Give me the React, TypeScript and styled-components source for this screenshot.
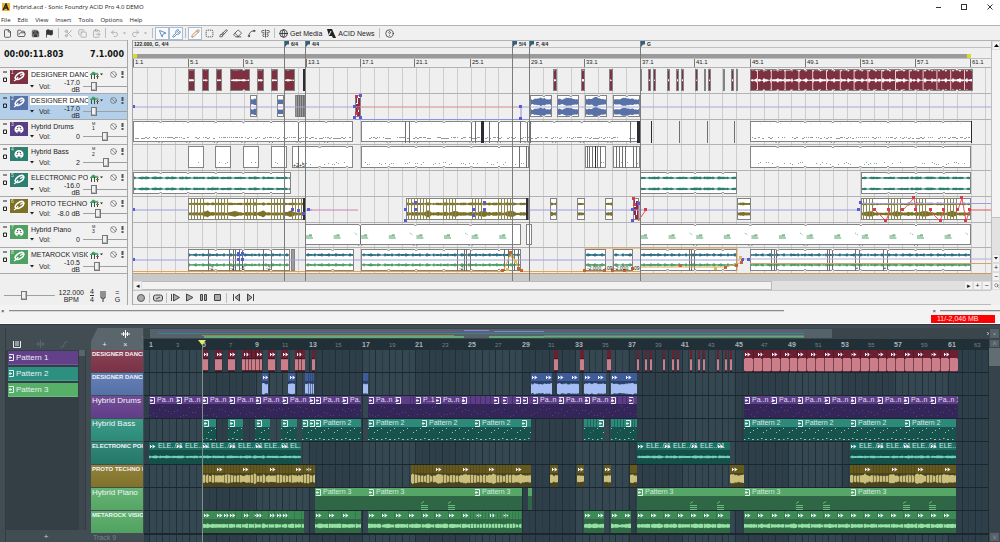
import React from "react";
import styled, { createGlobalStyle, css } from "styled-components";
import {
  File, FolderOpen, Save, Flag, Scissors, Copy, ClipboardPaste, Undo2, Redo2, MousePointer2,
  Wrench, Pencil, BoxSelect, Brush, Eraser, Spline, AlignCenterVertical, Globe, HelpCircle,
  Ban, Search,
} from "lucide-react";

const NARROW = `"Liberation Sans Narrow", "Liberation Sans", sans-serif`;

const Global = createGlobalStyle`
  *, *::before, *::after { box-sizing: border-box; }
  html, body { margin: 0; background: #efefef; }
  body { font-family: ${NARROW}; font-size: 7px; color: #1c1c1c; }
  button { font: inherit; color: inherit; background: none; border: 0; padding: 0; display: inline-flex; align-items: center; justify-content: center; }
  svg { display: block; flex: none; }
`;

/* ---------- drawing helpers ---------- */

const noise = (n: number) => {
  const v = Math.sin(n * 12.9898) * 43758.5453;
  return v - Math.floor(v);
};

type Amp = (x: number) => number;

const wavePath = (start: number, width: number, mid: number, amp: Amp) => {
  let top = `M0 ${mid}`;
  let back = "";
  for (let i = 0; i <= width; i += 1) {
    const a = amp(start + i);
    top += `L${i} ${(mid - a).toFixed(1)}`;
    back = `L${i} ${(mid + a * 0.9).toFixed(1)}` + back;
  }
  return top + back + "Z";
};

const amps: Record<string, Amp> = {
  red: (x) => ((x - 750) % 7 < 0.9 && x > 750 ? 3 : 4.3 + noise(x) * 1.2),
  blue: (x) => 2 + noise(x) * 1.4 + 2 * Math.max(0, 1 - Math.abs(((x - 529) % 27.6) - 12) / 6),
  teal: (x) => (x % 13.8 > 11 ? 0.4 : 0.8 + noise(x) * 0.7),
  olive: (x) => 0.6 + noise(x) * 1,
  oliveLow: (x) => 1 + noise(x) * 1.2 + 1.6 * Math.max(0, 1 - Math.abs((x % 27.6) - 14) / 5),
  meta: (x) => 0.6 + (x % 7 < 1 ? 1.4 : noise(x) * 0.6),
  fRed: (x) => ((x - 744) % 8.9 < 0.8 ? 5.8 : 6.9),
  fBlue: (x) => 4.4 + noise(x) * 1.6,
  fTeal: (x) => (x % 13.3 > 12 ? 0.4 : 0.7 + noise(x) * 0.9),
  fOlive: (x) => 2.6 + noise(x) * 2 + 1.4 * Math.max(0, 1 - Math.abs((x % 26.6) - 14) / 4),
  fGreen: (x) => 1.3 + noise(x) * 1.2,
};

/* ---------- window frame ---------- */

const Page = styled.div`
  min-height: 100vh;
  display: flex;
  flex-direction: column;
  overflow: hidden;
`;
const TitleBar = styled.header`
  height: 14px;
  background: #fff;
  display: flex;
  align-items: center;
  padding: 0 3px 0 2px;
  gap: 3px;
`;
const Title = styled.h1`
  margin: 0;
  flex: 1;
  font: 6px "Open Sans", sans-serif;
  color: #222;
`;
const WinButton = styled.button`
  width: 14px;
  height: 12px;
  margin-left: 9px;
`;
const MenuBar = styled.nav`
  height: 12px;
  background: #fff;
  border-bottom: 1px solid #b4b4b4;
  display: flex;
  align-items: center;
  gap: 7px;
  padding: 0 1px;
  button { font: 6px "Open Sans", sans-serif; }
`;
const ToolBar = styled.div`
  height: 14px;
  display: flex;
  align-items: center;
  background: #f0f0f0;
`;
const Tool = styled.button<{ $on?: boolean; $dim?: boolean; $w?: number }>`
  width: ${(p) => p.$w ?? 14}px;
  height: 13px;
  color: ${(p) => (p.$dim ? "#a2a2a2" : "#333")};
  ${(p) => p.$on && css`background: #f8fafd; border: 1px solid #a9bcd6; color: #34689d;`}
`;
const TextTool = styled.button`
  height: 13px;
  gap: 2px;
  padding: 0 3px 0 2px;
  font: 7px "Liberation Sans", sans-serif;
`;
const Divider = styled.span<{ $gap?: number }>`
  width: 1px;
  height: 10px;
  margin: 0 ${(p) => p.$gap ?? 2}px;
  background: #bdbdbd;
`;

const Workspace = styled.div`
  display: grid;
  grid-template-columns: 129px minmax(0, 1fr) 9px;
  column-gap: 0;
  background: #efefef;
`;
const LeftColumn = styled.section`
  margin-right: 1px;
  border-right: 1px solid #a6a6a6;
`;
const RightColumn = styled.section`
  border-left: 1px solid #a6a6a6;
  margin-left: 3px;
  min-width: 0;
`;
const Clock = styled.div`
  height: 27px;
  border-top: 1px solid #c2c2c2;
  display: flex;
  align-items: center;
  justify-content: space-between;
  padding: 0 3px 0 4px;
  font: bold 8px "DejaVu Sans", sans-serif;
  color: #111;
`;

/* ---------- track headers ---------- */

const TrackList = styled.div`
  height: 206px;
  display: grid;
  grid-template-rows: repeat(8, 1fr);
`;
const TrackHead = styled.div<{ $selected?: boolean }>`
  display: grid;
  grid-template-columns: 8px 18px 1fr;
  column-gap: 2px;
  padding-top: 2px;
  border-top: 1px solid #a9a9a9;
  background: ${(p) => (p.$selected ? "#b4cfe9" : "#f1f1f1")};
  min-height: 0;
  overflow: hidden;
`;
const MiniButtons = styled.div`
  display: flex;
  flex-direction: column;
  align-items: flex-end;
  gap: 4px;
  padding-top: 1px;
`;
const Tile = styled.div<{ $c: string }>`
  height: 14px;
  background: ${(p) => p.$c};
  color: #fff;
  position: relative;
  display: flex;
  align-items: center;
  justify-content: center;
`;
const TileNumber = styled.span`
  position: absolute;
  left: 1px;
  top: 0;
  font-size: 5px;
  line-height: 5px;
  opacity: 0.8;
`;
const HeadLines = styled.div`
  display: grid;
  grid-template-rows: 9px 12px;
  min-width: 0;
`;
const NameLine = styled.div`
  display: grid;
  grid-template-columns: 58px 12px 8px 10px 1fr;
  align-items: center;
`;
const Name = styled.span<{ $fill?: boolean }>`
  padding-left: 1px;
  line-height: 9px;
  white-space: nowrap;
  overflow: hidden;
  background: ${(p) => (p.$fill ? "#fff" : "transparent")};
`;
const VolLine = styled.label`
  display: grid;
  grid-template-columns: 8px 16px 24px 44px;
  column-gap: 1px;
  align-items: center;
`;
const Value = styled.span`
  text-align: right;
`;
const Slider = styled.input<{ $thumb?: string }>`
  appearance: none;
  width: 100%;
  height: 10px;
  margin: 0 0 0 2px;
  background: linear-gradient(#9f9f9f, #9f9f9f) center / 100% 1px no-repeat;
  &::-webkit-slider-thumb {
    appearance: none;
    width: 6px;
    height: 9px;
    background: #f0f0f0;
    border: 1px solid #777;
    box-shadow: inset -1px -1px #b9b9b9;
  }
`;
const TempoPanel = styled.div`
  height: 32px;
  display: flex;
  align-items: center;
  gap: 6px;
  padding: 12px 4px 0 2px;
  border-top: 1px solid #a9a9a9;
  line-height: 7px;
  text-align: center;
  label { width: 52px; }
`;
const Fraction = styled.span`
  display: grid;
  line-height: 7px;
  span + span { border-top: 1px solid #333; }
`;

/* ---------- timeline ---------- */

const Timeline = styled.div`
  position: relative;
  overflow: hidden;
`;
const MarkerBar = styled.div`
  height: 8px;
  border-top: 1px solid #b2b2b2;
  border-bottom: 1px solid #c0c0c0;
  font: bold 5px "Liberation Sans", sans-serif;
  line-height: 6px;
  padding-left: 1px;
`;
const LoopBar = styled.div`
  height: 11px;
  padding-top: 6px;
  border-bottom: 1px solid #c0c0c0;
`;
const LoopFill = styled.div`
  height: 4px;
  margin-right: 20px;
  background: #9b9b9b;
  border-left: 4px solid #d9dc2e;
  border-right: 4px solid #d9dc2e;
`;
const Ruler = styled.div`
  height: 8px;
  position: relative;
  font: 6px "Liberation Sans", sans-serif;
`;
const Tick = styled.span`
  position: absolute;
  top: 0;
  height: 8px;
  line-height: 7px;
  border-left: 1px solid #777;
  padding-left: 1px;
`;
const Marker = styled.div<{ $tall?: boolean }>`
  position: absolute;
  top: 1px;
  bottom: 0;
  border-left: 1px solid #7b7b7b;
  font: bold 5px "Liberation Sans", sans-serif;
  line-height: 6px;
  padding-left: 6px;
  z-index: 2;
  &::before {
    content: "";
    position: absolute;
    left: 0;
    top: 0;
    width: 4px;
    height: 6px;
    background: #2d6184;
    clip-path: polygon(0 0, 100% 0, 100% 60%, 50% 60%, 0 100%);
  }
`;
const Lanes = styled.div`
  height: 206px;
  position: relative;
  display: grid;
  grid-template-rows: repeat(8, 1fr);
`;
const GridLines = styled.svg`
  position: absolute;
  inset: 0;
`;
const Lane = styled.div`
  position: relative;
  border-top: 1px solid #b2b2b2;
  min-height: 0;
`;
const Clip = styled.div<{ $plain?: boolean; $gray?: boolean }>`
  position: absolute;
  top: 1px;
  bottom: 2px;
  overflow: hidden;
  background: ${(p) => (p.$gray ? "#9b9b9b" : "#fff")};
  outline: 1px solid #838383;
  outline-offset: -1px;
`;
const Overlay = styled.svg`
  position: absolute;
  inset: 0;
  overflow: visible;
  z-index: 1;
`;
const UnderLane = styled.div`
  height: 8px;
  background: #c9c9c9;
  border-top: 1px solid #c99c5c;
`;
const HScroll = styled.div`
  height: 9px;
  display: flex;
  background: #e0e0e0;
  button { width: 9px; background: #f4f4f4; border: 1px solid #ddd; }
`;
const HThumb = styled.div`
  flex: 0 1 630px;
  background: #f2f2f2;
  border: 1px solid #b9b9b9;
  border-left: 0;
`;
const Spacer = styled.span`
  flex: 1;
`;
const Transport = styled.div`
  height: 15px;
  display: flex;
  align-items: center;
  border-top: 1px solid #c7c7c7;
  border-bottom: 1px solid #b9b9b9;
  padding-left: 1px;
`;
const VScroll = styled.div`
  border-left: 1px solid #bcbcbc;
  border-top: 1px solid #b2b2b2;
  display: flex;
  flex-direction: column;
  background: #e2e2e2;
  height: 250px;
  button { height: 9px; background: #f4f4f4; border: 1px solid #ddd; }
`;
const VThumb = styled.div`
  flex: 0 1 168px;
  background: #f4f4f4;
  border-bottom: 1px solid #c0c0c0;
`;
const Dock = styled.footer`
  height: 19px;
  background: #f3f3f3;
  border-bottom: 1px solid #fff;
  display: grid;
  grid-template-rows: 9px 9px;
  align-items: end;
`;
const DockEdge = styled.div`
  display: flex;
  align-items: center;
  gap: 4px;
  padding-left: 1px;
  height: 6px;
  line-height: 6px;
  font-size: 6px;
`;
const DockRule = styled.span<{ $w: number }>`
  flex: 0 1 ${(p) => p.$w}px;
  height: 2px;
  border-top: 1px solid #8b8b8b;
  border-bottom: 1px solid #d8d8d8;
`;
const Memory = styled.output`
  justify-self: end;
  margin-right: 5px;
  width: 64px;
  height: 8px;
  padding-left: 6px;
  background: #fd0202;
  color: #ffe3e3;
  line-height: 8px;
  font-size: 7px;
`;

const LEFT = 133;
const px = (x: number) => x - LEFT;

type Kind = "red" | "blue" | "drums" | "bass" | "teal" | "olive" | "piano" | "meta" | "gray" | "mix";
type Span = [number, number, Kind?];

const MAROON = "#7d3040", BLUE = "#5872a8", PURPLE = "#563f86", TEAL = "#2d8070", OLIVE = "#7c7125", GREEN = "#4ea162";

const ClipArt = ({ kind, x, w }: { kind: Kind; x: number; w: number }) => {
  const dots: React.ReactNode[] = [];
  if (kind === "drums") {
    for (let i = 2; i < w - 2; i += 2) {
      const n = noise(x + i);
      if (n > 0.25) dots.push(<rect key={i} x={i} y={15 + Math.round(n * 2)} width={n > 0.6 ? 2 : 1} height="1" fill="#969696" />);
      if (i % 10 === 0) dots.push(<rect key={`t${i}`} x={i} y={2} width="1" height="1" fill="#ddd" />);
    }
  }
  if (kind === "bass") {
    for (let i = 4; i < w - 2; i += 2) {
      const n = noise(x * 3 + i);
      if (n > 0.45 && (x + i) % 27 < 21) dots.push(<rect key={i} x={i} y={14 + Math.round(n * 4)} width="1" height="1" fill="#7fa79c" />);
    }
  }
  if (kind === "piano" && w > 20) {
    for (let i = 0; i < w - 4; i += 27.6) {
      dots.push(
        <path key={i} d={`M${i + 1} 12h6M${i + 1} 14h7M${i + 4} 11h3`} stroke="#4ea162" strokeWidth="1" />,
      );
      if (Math.round(i / 27.6) % 2 === 1) dots.push(<path key={`s${i}`} d={`M${i + 22} 9l3 2`} stroke="#6cb07c" strokeDasharray="1 1" />);
    }
  }
  return (
    <svg width={w} height="23">
      {kind === "red" && [6, 17].map((m) => <path key={m} d={wavePath(x, w, m, amps.red)} fill={MAROON} />)}
      {kind === "red" && w > 100 && Array.from({ length: 40 }, (_, i) => <rect key={i} x={i * 13.8 + 7} y="1" width="1" height="21" fill="#e6c9ce" />)}
      {kind === "blue" && [7, 17].map((m) => <path key={m} d={wavePath(x, w, m, amps.blue)} fill={BLUE} />)}
      {kind === "teal" && [6, 17].map((m) => <path key={m} d={wavePath(x, w, m, amps.teal)} fill={TEAL} />)}
      {kind === "olive" && (
        <>
          <path d={wavePath(x, w, 6, amps.olive)} fill={OLIVE} />
          <path d={wavePath(x, w, 16, amps.oliveLow)} fill={OLIVE} />
        </>
      )}
      {kind === "meta" && (
        <>
          <path d={wavePath(x, w, 6, amps.meta)} fill="#2f6f86" />
          <path d={wavePath(x, w, 16, amps.meta)} fill={GREEN} />
        </>
      )}
      {kind === "mix" && <path d="M1 0v8M4 3v9M2 9v8M5 12v10M3 17v6" stroke="#8a2a48" strokeWidth="2" />}
      {dots}
    </svg>
  );
};

interface Track {
  name: string;
  color: string;
  vol: string;
  level: number;
  kind: Kind;
  spans: Span[];
  cuts?: number[];
  bold?: [number, number][];
  notch?: boolean;
  midi?: number;
}

const range = (a: number, b: number, step: number) => {
  const out: number[] = [];
  for (let v = a; v < b; v += step) out.push(v);
  return out;
};

const tracks: Track[] = [
  {
    name: "DESIGNER DANCE ..", color: MAROON, vol: "-17.0 dB", level: 20, kind: "red", notch: true,
    spans: [[188, 195], [202, 209], [216, 222], [230, 250], [257, 264], [271, 278], [284, 295], [553, 557], [581, 585], [609, 613],
      [640, 642], [648, 651], [653, 656], [667, 670], [676, 679], [681, 684], [695, 698], [704, 706], [708, 711], [723, 725], [731, 734], [736, 738], [750, 973]],
    bold: [[303, 2]],
  },
  {
    name: "DESIGNER DANCE ..", color: BLUE, vol: "-17.0 dB", level: 20, kind: "blue", notch: true,
    spans: [[250, 257], [277, 284], [295, 305, "gray"], [355, 361, "mix"], [530, 552], [557, 579], [585, 607], [613, 640]],
    cuts: [297, 299, 301, 303],
  },
  {
    name: "Hybrid Drums", color: PURPLE, vol: "0", level: 50, kind: "drums", notch: true, midi: 1,
    spans: [[133, 353], [361, 640], [750, 972]],
    cuts: [298, 405, 409, 471, 475, 489, 498, 520, 527, 530, 630, 679, 707, 734],
    bold: [[481, 3], [637, 3], [651, 1], [971, 1]],
  },
  {
    name: "Hybrid Bass", color: TEAL, vol: "2", level: 52, kind: "bass", notch: true, midi: 2,
    spans: [[188, 204], [215, 231], [243, 259], [271, 287], [292, 353], [361, 529], [585, 606], [613, 640], [750, 971]],
    cuts: [298, 305, 519, 526, 587, 589, 592, 597, 600, 616, 619, 622, 625, 633, 636],
    bold: [[595, 1]],
  },
  {
    name: "ELECTRONIC POIN..", color: TEAL, vol: "-16.0 dB", level: 20, kind: "teal", notch: true,
    spans: [[133, 291], [640, 737], [861, 971]],
  },
  {
    name: "PROTO TECHNO h..", color: OLIVE, vol: "-8.0 dB", level: 32, kind: "olive",
    spans: [[188, 305], [406, 529], [550, 557], [577, 585], [605, 613], [633, 639, "mix"], [737, 751], [861, 971]],
    cuts: [...range(191, 204, 3), ...range(215, 230, 3), ...range(244, 258, 3), ...range(271, 286, 3), ...range(292, 302, 3),
      ...range(408, 430, 3), ...range(443, 458, 3), ...range(472, 483, 3), ...range(498, 513, 3), ...range(863, 874, 3), ...range(888, 902, 3), ...range(916, 928, 3), ...range(944, 958, 3)],
    bold: [[303, 2], [526, 2]],
  },
  {
    name: "Hybrid Piano", color: GREEN, vol: "0", level: 50, kind: "piano", notch: true, midi: 3,
    spans: [[305, 521], [526, 532], [640, 971]],
    cuts: [360],
  },
  {
    name: "METAROCK VISION..", color: GREEN, vol: "-10.5 dB", level: 28, kind: "meta", notch: true,
    spans: [[188, 290], [291, 295, "gray"], [305, 354], [361, 521], [585, 606], [613, 633], [640, 737], [750, 971]],
    cuts: [208, 229, 233, 235, 239, 242, 263, 271, 457, 464, 466, 470, 504, 508, 514, 518, 689, 691, 694, 771, 774, 776, 827, 829, 832, 855, 859, 883, 887],
  },
];

const rulerTicks: [number, string][] = [
  [133, "1.1"], [188, "5.1"], [243, "9.1"], [306, "13.1"], [360, "17.1"], [414, "21.1"], [470, "25.1"], [529, "29.1"], [584, "33.1"],
  [640, "37.1"], [694, "41.1"], [750, "45.1"], [805, "49.1"], [860, "53.1"], [915, "57.1"], [970, "61.1"],
];
const markers: [number, string][] = [[284, "6/4"], [305, "4/4"], [512, "5/4"], [529, "F, 4/4"], [640, "G"]];
const barLines = [...range(147, 284, 13.8), 298, ...range(319, 512, 13.8), ...range(543, 992, 13.8)];

const Nodes = ({ at, fill }: { at: [number, number][]; fill: string }) => (
  <>{at.map(([x, y], i) => <rect key={i} x={px(x) - 2} y={y - 2} width="3" height="3" fill={fill} />)}</>
);

const TransposeMarks = ({ at, y }: { at: [number, string][]; y: number }) => (
  <>{at.map(([x, t]) => <text key={x} x={px(x)} y={y} fontSize="5" fill="#222">{t}</text>)}</>
);

const envelopes: Record<number, React.ReactNode> = {
  1: (
    <>
      <path d={`M0 13H${px(361)}M${px(521)} 13H1200`} stroke="#a7a9d8" />
      <path d={`M${px(361)} 13H${px(521)}`} stroke="#d58a8a" />
      <path d={`M${px(355)} 25.5H${px(529)}M${px(521)} 13V25`} stroke="#8f92e0" />
      <Nodes fill="#5a5ad8" at={[[134, 13], [355, 13], [355, 24], [361, 2], [361, 24], [521, 13], [521, 25]]} />
      <Nodes fill="#c53a48" at={[[357, 3], [359, 15], [357, 20]]} />
    </>
  ),
  3: <TransposeMarks at={[[293, "+2"], [299, "+5"]]} y={22} />,
  5: (
    <>
      <path d={`M0 13H${px(188)}M${px(305)} 13H${px(312)}M${px(529)} 13H${px(861)}M${px(861)} 6.5H1200`} stroke="#9b9de0" />
      <path d={`M${px(307)} 13H${px(358)}`} stroke="#c983b0" />
      <path d={`M${px(638)} 24L${px(646)} 13M${px(640)} 4V24M${px(875)} 13L${px(886)} 24L${px(890)} 13M${px(903)} 13L${px(914)} 1L${px(916)} 13M${px(930)} 14L${px(940)} 24L${px(944)} 13M${px(958)} 13L${px(962)} 1L${px(966)} 24L${px(970)} 13H1200`} stroke="#dd5660" fill="none" />
      <Nodes fill="#5a5ad8" at={[[134, 13], [293, 13], [299, 14], [304, 17], [309, 13], [406, 13], [406, 24], [416, 6], [416, 13], [474, 13], [474, 19], [485, 6], [485, 13], [633, 13], [633, 24], [639, 7], [859, 13], [861, 6]]} />
      <Nodes fill="#d93c48" at={[[634, 2], [635, 8], [646, 13], [875, 13], [886, 24], [889, 13], [903, 13], [914, 1], [916, 13], [931, 13], [941, 24], [944, 13], [958, 13], [962, 1], [966, 24], [970, 13]]} />
    </>
  ),
  7: (
    <>
      <path d={`M0 12H${px(740)}`} stroke="#9b9de0" />
      <path d={`M${px(740)} 11H1200`} stroke="#aeb0df" />
      <path d={`M${px(750)} 15.5H1200`} stroke="#d7a273" />
      <path d={`M0 23.5H${px(503)}L${px(511)} 5L${px(520)} 22M${px(523)} 23.5H${px(640)}M${px(640)} 19H${px(690)}L${px(725)} 19L${px(740)} 15M${px(585)} 0H${px(737)}V23`} stroke="#dda75a" fill="none" />
      <Nodes fill="#5a5ad8" at={[[134, 12], [239, 6], [243, 6], [239, 12], [243, 12], [743, 12], [749, 12]]} />
      <Nodes fill="#c9632c" at={[[503, 23], [511, 5], [519, 21], [522, 23], [585, 23], [605, 23], [613, 23], [625, 23], [633, 21], [681, 18], [726, 20], [737, 18], [742, 15]]} />
      <Nodes fill="#e0bb45" at={[[513, 9], [516, 14], [508, 22], [716, 21], [741, 10]]} />
      <TransposeMarks at={[[209, "-2"], [230, "-2"], [240, "-5"], [266, "-2"], [459, "-2"], [587, "-2.000, -.09"], [614, "-2.000, -.09"], [856, "•"], [884, "•"]]} y={22} />
    </>
  ),
};

const LoopIcon = () => (
  <svg width="14" height="12" viewBox="0 0 14 12" fill="none" stroke="currentColor">
    <ellipse cx="7.500" cy="5" rx="4.800" ry="2.600" transform="rotate(-35 7.500 5)" strokeWidth="1.600" />
    <path d="M2 10C3 9 5 9 6 6M8 4.500l3-1.500" strokeWidth="1.200" />
  </svg>
);
const MidiIcon = () => (
  <svg width="14" height="12" viewBox="0 0 14 12">
    <path d="M3 8.500A4.500 4.500 0 1 1 11 8.500L8.500 10.500V8.500H5.500V10.500Z" fill="#fff" />
    <path d="M5 6.500h.01M7 4h.01M9 6.500h.01M5.500 4.700h.01M8.500 4.700h.01" stroke="#333" strokeWidth="1.200" strokeLinecap="round" />
  </svg>
);
const FxIcon = () => (
  <svg width="9" height="8" viewBox="0 0 9 8">
    <path d="M0 3.500L3 .5L6 2V4H0Z" fill="#3ca35f" />
    <path d="M5 2.500L7.500 1.500L9 4H5Z" fill="#58b47a" />
    <path d="M1.500 4V8M4.500 3V8M7.500 4V8" stroke="#3a5044" />
    <path d="M6 5.500h3" stroke="#c0504d" />
  </svg>
);
const Down = ({ s = 4 }: { s?: number }) => (
  <svg width={s} height="3" viewBox="0 0 4 3"><path d="M0 0H4L2 2.500Z" fill="currentColor" /></svg>
);

const TrackHeader = ({ track, index }: { track: Track; index: number }) => (
  <TrackHead $selected={index === 1}>
    <MiniButtons>
      <button aria-label="Minimize track"><svg width="5" height="2"><path d="M0 1H4" stroke="#222" /></svg></button>
      <button aria-label="Restore track"><svg width="5" height="5"><path d="M.5 1V4.500H3.500V1Z" stroke="#222" fill="none" /></svg></button>
    </MiniButtons>
    <Tile $c={track.color}>
      <TileNumber>{index + 1}</TileNumber>
      {track.midi ? <MidiIcon /> : <LoopIcon />}
    </Tile>
    <HeadLines>
      <NameLine>
        <Name $fill={index < 2}>{track.name}</Name>
        {track.midi ? <MidiPort n={track.midi} /> : <button aria-label="Track effects"><FxIcon /></button>}
        {track.midi ? <i /> : <Down s={3} />}
        <button aria-label="Mute"><Ban size={7} color="#555" /></button>
        <button aria-label="Solo"><svg width="3" height="7"><path d="M1.500 0V4M1.500 5V7" stroke="#555" strokeWidth="2" /></svg></button>
      </NameLine>
      <VolLine>
        <Down />
        <span>Vol:</span>
        <Value>{track.vol}</Value>
        <Slider type="range" min="0" max="100" defaultValue={track.level} />
      </VolLine>
    </HeadLines>
  </TrackHead>
);

const Port = styled.span`
  font-size: 4px;
  line-height: 4px;
  height: 9px;
  padding-left: 4px;
  transform-origin: left;
  display: grid;
  b { font-size: 5px; font-weight: normal; }
`;
const MidiPort = ({ n }: { n: number }) => <Port>M<b>{n}</b></Port>;

const LaneView = ({ track, index }: { track: Track; index: number }) => (
  <Lane>
    {track.spans.map(([a, b, kind], i) => (
      <Clip key={i} $gray={kind === "gray"} style={{ left: px(a), width: b - a }}>
        <ClipArt kind={kind ?? track.kind} x={a} w={b - a} />
      </Clip>
    ))}
    <Overlay width="100%" height="24">
      {(track.cuts ?? []).map((x) => <path key={x} d={`M${px(x) + 0.5} 1V23`} stroke={track.kind === "olive" ? "#8b854f" : "#6f6f6f"} />)}
      {(track.bold ?? []).map(([x, w]) => <rect key={x} x={px(x)} y="1" width={w} height="22" fill="#2e2b33" />)}
      {track.notch && track.spans.filter(([a, b]) => b - a > 19).map(([a, b]) => {
        const step = track.kind === "piano" ? 55.2 : track.kind === "blue" || track.kind === "red" ? 13.8 : 27.6;
        return range(a + step, b - 4, step).map((x) => (
          <path key={x} d={`M${px(x) - 2} 1l2 2l2-2M${px(x) - 2} 23l2-2l2 2`} fill="#efefef" stroke="#8a8a8a" />
        ));
      })}
      {envelopes[index]}
    </Overlay>
  </Lane>
);

const Glyph = ({ d, fill = "#aaa" }: { d: string; fill?: string }) => (
  <svg width="9" height="9" viewBox="0 0 9 9"><path d={d} fill={fill} stroke="#444" /></svg>
);

const I = { size: 9, strokeWidth: 2 };

const AcidWindow = () => (
  <>
    <TitleBar>
      <svg width="8" height="8" viewBox="0 0 8 8">
        <rect width="8" height="8" fill="#edb42c" />
        <path d="M1.200 7L4 1L6.300 7M2.500 5H5.800" stroke="#222" strokeWidth="1.500" fill="none" />
      </svg>
      <Title>Hybrid.acd - Sonic Foundry ACID Pro 4.0 DEMO</Title>
      <WinButton aria-label="Minimize"><svg width="5" height="5"><path d="M0 2.500H5" stroke="#333" /></svg></WinButton>
      <WinButton aria-label="Maximize"><svg width="6" height="6"><rect x=".5" y=".5" width="5" height="5" fill="none" stroke="#333" /></svg></WinButton>
      <WinButton aria-label="Close"><svg width="6" height="6"><path d="M.5 .5L5.500 5.500M5.500 .5L.5 5.500" stroke="#333" /></svg></WinButton>
    </TitleBar>
    <MenuBar>
      {["File", "Edit", "View", "Insert", "Tools", "Options", "Help"].map((m) => <button key={m}>{m}</button>)}
    </MenuBar>
    <ToolBar>
      <Tool aria-label="New"><File {...I} /></Tool>
      <Tool aria-label="Open"><FolderOpen {...I} /></Tool>
      <Tool aria-label="Save"><Save {...I} fill="#333" stroke="#999" /></Tool>
      <Tool aria-label="Publish"><Flag {...I} fill="#333" /></Tool>
      <Divider />
      <Tool $dim aria-label="Cut"><Scissors {...I} /></Tool>
      <Tool $dim aria-label="Copy"><Copy {...I} /></Tool>
      <Tool $dim aria-label="Paste"><ClipboardPaste {...I} /></Tool>
      <Divider />
      <Tool $dim $w={12} aria-label="Undo"><Undo2 {...I} /></Tool>
      <Tool $dim $w={9} aria-label="Undo history"><Down s={3} /></Tool>
      <Tool $dim $w={12} aria-label="Redo"><Redo2 {...I} /></Tool>
      <Tool $dim $w={9} aria-label="Redo history"><Down s={3} /></Tool>
      <Divider />
      <Tool $on aria-label="Snapping"><MousePointer2 {...I} /></Tool>
      <Tool $on aria-label="Automatic settings"><Wrench {...I} /></Tool>
      <Divider />
      <Tool $on aria-label="Draw"><Pencil {...I} color="#b5651d" /></Tool>
      <Tool aria-label="Select"><BoxSelect {...I} /></Tool>
      <Tool aria-label="Paint"><Brush {...I} /></Tool>
      <Tool aria-label="Erase"><Eraser {...I} /></Tool>
      <Tool aria-label="Envelope"><Spline {...I} /></Tool>
      <Tool aria-label="Time select"><AlignCenterVertical {...I} /></Tool>
      <Divider />
      <TextTool><Globe {...I} />Get Media</TextTool>
      <TextTool>
        <svg width="9" height="9" viewBox="0 0 9 9"><path d="M0 0H5L9 9H6L5 7H2Z" fill="#222" /><path d="M2 6L4 2" stroke="#fff" /></svg>
        ACID News
      </TextTool>
      <Divider />
      <Tool aria-label="Help"><HelpCircle {...I} /></Tool>
    </ToolBar>
    <Workspace>
      <LeftColumn>
        <Clock><span>00:00:11.803</span><span>7.1.000</span></Clock>
        <TrackList>{tracks.map((t, i) => <TrackHeader key={i} track={t} index={i} />)}</TrackList>
        <TempoPanel>
          <label><Slider type="range" aria-label="Tempo" min="0" max="100" defaultValue={39} /></label>
          <span>122.000<br />BPM</span>
          <Fraction><span>4</span><span>4</span></Fraction>
          <svg width="6" height="12"><path d="M1 1V8H5V1M3 1V7M3 8V12" stroke="#333" fill="none" /></svg>
          <span>= G</span>
        </TempoPanel>
      </LeftColumn>
      <RightColumn>
        <Timeline>
          <MarkerBar>122.000, G, 4/4</MarkerBar>
          <LoopBar><LoopFill /></LoopBar>
          <Ruler>{rulerTicks.map(([x, t]) => <Tick key={t} style={{ left: px(x) }}>{t}</Tick>)}</Ruler>
          <Lanes>
            <GridLines width="100%" height="100%">
              {barLines.map((x) => <path key={x} d={`M${Math.round(px(x)) + 0.5} 0V206`} stroke="#cdcdcd" />)}
            </GridLines>
            {tracks.map((t, i) => <LaneView key={i} track={t} index={i} />)}
          </Lanes>
          <UnderLane />
          {markers.map(([x, t]) => <Marker key={x} style={{ left: px(x) }}>{t}</Marker>)}
        </Timeline>
        <HScroll>
          <button aria-label="Scroll left">◂</button>
          <HThumb />
          <Spacer />
          <button aria-label="Scroll right">▸</button>
          <button aria-label="Zoom in">+</button>
          <button aria-label="Zoom out">−</button>
        </HScroll>
        <Transport>
          <Tool aria-label="Record"><svg width="8" height="8"><circle cx="4" cy="4" r="3.500" fill="#aaa" stroke="#555" /></svg></Tool>
          <Divider $gap={1} />
          <Tool aria-label="Loop playback"><svg width="10" height="8"><rect x=".5" y="1" width="9" height="6" rx="2" fill="#ccc" stroke="#444" /><path d="M3 5L7 3" stroke="#444" /></svg></Tool>
          <Divider $gap={1} />
          <Tool aria-label="Play from start"><Glyph d="M.5 1V8M2.500 1V8L8.500 4.500Z" /></Tool>
          <Tool aria-label="Play"><Glyph d="M1.500 1V8L8 4.500Z" /></Tool>
          <Tool aria-label="Pause"><Glyph d="M1.500 1.500H3.500V7.500H1.500ZM5.500 1.500H7.500V7.500H5.500Z" /></Tool>
          <Tool aria-label="Stop"><Glyph d="M1.500 1.500H7.500V7.500H1.500Z" /></Tool>
          <Divider />
          <Tool aria-label="Go to start"><Glyph d="M1.500 1V8M7.500 1V8L3 4.500Z" /></Tool>
          <Tool aria-label="Go to end"><Glyph d="M7.500 1V8M1.500 1V8L6 4.500Z" /></Tool>
        </Transport>
      </RightColumn>
      <VScroll>
        <button aria-label="Scroll up"><svg width="5" height="3"><path d="M0 3H5L2.500 0Z" /></svg></button>
        <VThumb />
        <Spacer />
        <button aria-label="Scroll down"><Down /></button>
        <button aria-label="Taller tracks">+</button>
        <button aria-label="Shorter tracks">−</button>
        <button aria-label="Zoom tool"><Search size={5} /></button>
      </VScroll>
    </Workspace>
    <Dock>
      <DockEdge>×<DockRule $w={775} /><Spacer />×<DockRule $w={60} /></DockEdge>
      <Memory>11/-2,046 MB</Memory>
    </Dock>
  </>
);

/* ---------- playlist window ---------- */

const Playlist = styled.section`
  flex: 1;
  display: grid;
  grid-template-columns: 86px 58px minmax(0, 1fr) 11px;
  padding-top: 3px;
  background: #414d53;
  border-top: 1px solid #2f393e;
  border-bottom: 1px solid #6a767b;
  color: #e8eef0;
  min-height: 218px;
`;
const Picker = styled.aside`
  margin-left: 5px;
  border-left: 1px solid #323c41;
  display: grid;
  grid-template-rows: 22px 1fr 12px;
`;
const PickerTools = styled.div`
  display: flex;
  align-items: flex-end;
  padding: 0 8px 2px 7px;
  gap: 15px;
  color: #55626a;
`;
const PickerBody = styled.div`
  display: grid;
  grid-template-columns: 72px 7px;
  background: #343e45;
`;
const PatternList = styled.div`
  display: flex;
  flex-direction: column;
  gap: 2px;
  padding: 1px 0 0 2px;
`;
const PatternButton = styled.button<{ $c: string }>`
  height: 14px;
  width: 100%;
  justify-content: flex-start;
  gap: 2px;
  padding-left: 1px;
  background: ${(p) => p.$c};
  border-bottom: 1px solid #ffffff22;
  font-size: 8px;
  color: #eceef2;
`;
const PickerScroll = styled.div`
  margin-left: 1px;
  background: #3d474d;
  &::before { content: ""; display: block; height: 6px; background: #59656b; }
`;
const AddButton = styled.button`
  font-size: 8px;
  color: #c3ccd0;
`;
const Heads = styled.div`
  margin-left: 5px;
  margin-right: 1px;
  overflow: hidden;
  display: grid;
  grid-template-rows: 22px repeat(8, 23px) 1fr;
`;
const HeadTools = styled.div`
  background: #5a666c;
  clip-path: polygon(10% 0, 100% 0, 100% 100%, 0 100%, 0 60%);
  display: grid;
  grid-template-columns: repeat(3, 1fr);
  align-items: center;
  justify-items: center;
  padding: 1px 0 1px 3px;
  button { height: 9px; width: 10px; }
`;
const PlayHead = styled.div<{ $c: string }>`
  margin-bottom: 1px;
  border-radius: 0 2px 2px 0;
  background: linear-gradient(#ffffff10, #00000010), ${(p) => p.$c};
  padding: 0 1px;
  position: relative;
`;
const PlayName = styled.span<{ $caps?: boolean }>`
  display: block;
  font-size: ${(p) => (p.$caps ? 6 : 8)}px;
  font-weight: ${(p) => (p.$caps ? "bold" : "normal")};
  line-height: 9px;
  white-space: nowrap;
  color: #f2f4f6;
`;
const Lamp = styled.i`
  position: absolute;
  right: 3px;
  bottom: 2px;
  width: 5px;
  height: 5px;
  border-radius: 50%;
  background: #c8e25a;
  border: 1px solid #4b6c20;
`;
const GhostHead = styled.div`
  padding: 0 2px;
  font-size: 7px;
  line-height: 8px;
  color: #77848a;
  height: 8px;
  overflow: hidden;
`;
const Arrange = styled.div`
  overflow: hidden;
  display: grid;
  grid-template-rows: 11px 11px repeat(8, 23px) 1fr;
  position: relative;
  background: #2e3f4a;
  min-width: 0;
`;
const MiniMap = styled.div`
  background: #3a464c;
  display: flex;
  justify-content: space-between;
`;
const FlRuler = styled.div`
  background: #212f37;
  position: relative;
`;
const BarNo = styled.span<{ $major?: boolean }>`
  position: absolute;
  top: 2px;
  line-height: 8px;
  font-size: ${(p) => (p.$major ? 7 : 6)}px;
  font-weight: ${(p) => (p.$major ? "bold" : "normal")};
  color: ${(p) => (p.$major ? "#a8b4ba" : "#75838a")};
`;
const FlGrid = styled.svg`
  grid-area: 3 / 1 / -1 / 2;
`;
const FlLane = styled.div<{ $row: number }>`
  grid-area: ${(p) => p.$row + 3} / 1 / ${(p) => p.$row + 4} / 2;
  position: relative;
  border-bottom: 1px solid #1b272e;
`;
const FlClip = styled.div<{ $bg: string }>`
  position: absolute;
  top: 0;
  bottom: 0;
  background: ${(p) => p.$bg};
  overflow: hidden;
`;
const FlClipHead = styled.div<{ $c: string }>`
  height: 8px;
  background: ${(p) => p.$c};
  font-size: 7px;
  line-height: 8px;
  color: #d9e6e6;
  white-space: nowrap;
`;
const SegLabel = styled.span`
  position: absolute;
  top: 0;
  height: 8px;
  display: flex;
  align-items: center;
  gap: 2px;
`;
const FlCuts = styled.svg`
  position: absolute;
  inset: 0;
`;
const FlScroll = styled.div`
  display: grid;
  grid-template-rows: 11px 9px 18px 1fr 10px;
  background: #37434a;
  color: #8a979d;
  font-size: 7px;
  button { background: #56626a; border: 1px solid #3c474d; }
`;
const FlThumb = styled.i`
  background: #616d73;
`;
const PlayPos = styled.div`
  position: absolute;
  top: 16px;
  bottom: 0;
  width: 1px;
  background: #7f9084;
  &::before {
    content: "";
    position: absolute;
    left: -4px;
    top: -4px;
    border: 4px solid transparent;
    border-top: 5px solid #dcec6c;
    border-bottom: 0;
  }
`;

const FLX = 144;
const fx = (x: number) => x - FLX;

const PatternIcon = () => (
  <svg width="5" height="7" viewBox="0 0 5 7"><path d="M0 .5H4.500V6.500H0M0 3.500H3M1 2v3" stroke="#e6f2f2" fill="none" /></svg>
);
const WaveIcon = () => (
  <svg width="6" height="5" viewBox="0 0 6 5"><path d="M0 2.500H2M.5 1V4" stroke="#eef" /><path d="M2.500 .5L5.500 2.500L2.500 4.500Z" fill="#eef" /></svg>
);

interface FlTrack {
  name: string;
  caps?: boolean;
  label: string;
  head: string;
  bg: string;
  ink: string;
  wave?: Amp;
  waveMid?: number;
  dots?: "drums" | "bass" | "piano";
  pattern?: boolean;
  clips: [number, number][];
  segs: [number, string?][];
  cuts?: number[];
}

const every = (from: number, to: number, step: number, text?: string): [number, string?][] =>
  range(from, to, step).map((x) => [Math.round(x), text]);

const flTracks: FlTrack[] = [
  {
    name: "DESIGNER DANCE T..", caps: true, label: "#82354a", head: "#6d1f30", bg: "#3a1c27", ink: "#cb7d8a", wave: amps.fRed, waveMid: 15,
    clips: [[202, 208], [215, 222], [228, 235], [242, 262], [268, 275], [281, 288], [295, 305], [312, 315], [554, 558], [580, 584], [607, 611], [637, 639], [645, 647], [650, 652],
      [663, 665], [672, 674], [677, 679], [690, 692], [698, 700], [703, 705], [717, 719], [725, 727], [730, 732], [744, 958]],
    segs: [[203], [216], [229], [243], [256], [269], [282], [296], [555], [581], [608], ...every(744, 956, 13.3)],
    cuts: [245, 248, 251, 255, 259, 298, 301, ...range(753, 956, 8.9)],
  },
  {
    name: "DESIGNER DANCE T..", caps: true, label: "#5b78b2", head: "#3f5c98", bg: "#2b4068", ink: "#a5bdf3", wave: amps.fBlue, waveMid: 16,
    clips: [[262, 268], [288, 295], [305, 314], [363, 368], [531, 552], [557, 579], [584, 606], [611, 637]],
    segs: [[262], [289], [531], [545], [557], [571], [584], [597], [611], [625]],
    cuts: [308, 310, 312],
  },
  {
    name: "Hybrid Drums", label: "#684191", head: "#5e3c87", bg: "#35265a", ink: "#56417f", dots: "drums", pattern: true,
    clips: [[149, 361], [368, 637], [744, 958]],
    segs: [...every(149, 300, 26.5, "Pa..n 1"), [309], [315, "Pa..n 1"], [342, "Pa..1"], [368, "Pa..n 1"], [395], [415, "P..1"], [435, "Pa..n 1"], [461], [493], [502], [515], [522],
      [532, "Pa..n 1"], [558, "Pa..n 1"], [584, "Pa..n 1"], [610], [628], ...every(744, 950, 26.5, "Pa..n 1")],
    cuts: [410, 413, 470, 475, 480, 485, 490, 500, 507, 512, 528, 617, 622, 626, 633],
  },
  {
    name: "Hybrid Bass", label: "#2f9480", head: "#2d8a7a", bg: "#17524c", ink: "#8cc9bd", dots: "bass", pattern: true,
    clips: [[202, 216], [228, 243], [255, 270], [281, 297], [302, 361], [368, 531], [584, 604], [611, 637], [744, 956]],
    segs: [[203], [229], [256], [282], [302], [309], [315, "Pattern 2"], [368, "Pattern 2"], [421, "Pattern 2"], [474, "Pattern 2"], [521], [598], [625],
      ...every(744, 950, 53.2, "Pattern 2")],
    cuts: [587, 590, 593, 596, 614, 617, 620, 623, 632, 634],
  },
  {
    name: "ELECTRONIC POINT..", caps: true, label: "#268070", head: "#1d6e62", bg: "#155048", ink: "#72cfc0", wave: amps.fTeal, waveMid: 15,
    clips: [[149, 301], [637, 730], [850, 956]],
    segs: [...every(149, 270, 26.5, "ELE..01"), [281, "EL..1"], ...every(637, 715, 26.8, "ELE..01"), [717], ...every(850, 950, 26.5, "ELE..01")],
  },
  {
    name: "PROTO TECHNO hP..", caps: true, label: "#8a7a2e", head: "#65591c", bg: "#4a4520", ink: "#cabf7c", wave: amps.fOlive, waveMid: 14,
    clips: [[202, 315], [411, 531], [550, 558], [577, 584], [604, 611], [630, 637], [730, 744], [850, 956]],
    segs: [[216], [242], [269], [295], [305], [435], [462], [488], [515], [551], [577], [604], [731], [864], [891], [917], [944]],
    cuts: [...range(205, 215, 3), ...range(224, 240, 3), ...range(250, 266, 3), ...range(276, 292, 3), ...range(303, 314, 3), ...range(414, 434, 3), ...range(443, 460, 3), ...range(470, 486, 3), ...range(496, 513, 3), ...range(853, 862, 3), ...range(873, 889, 3), ...range(899, 915, 3), ...range(926, 942, 3)],
  },
  {
    name: "Hybrid Piano", label: "#5bb06b", head: "#56a767", bg: "#2f6645", ink: "#6bbb7c", dots: "piano", pattern: true,
    clips: [[315, 522], [528, 532], [637, 956]],
    segs: [[315, "Pattern 3"], [368, "Pattern 3"], [474, "Pattern 3"], [637, "Pattern 3"], [744, "Pattern 3"], [850, "Pattern 3"]],
  },
  {
    name: "METAROCK VISIONS..", caps: true, label: "#56ac66", head: "#3d8b54", bg: "#2f6a45", ink: "#93e0a2", wave: amps.fGreen, waveMid: 15,
    clips: [[202, 304], [315, 361], [368, 522], [584, 604], [611, 631], [637, 730], [744, 956]],
    segs: [[203], [216], [223], [229], [243], [253], [256], [269], [276], [282], ...every(315, 350, 13.4), ...every(368, 515, 13.4), [584], [597], [611], [624], ...every(637, 725, 13.3), ...every(744, 950, 13.3)],
    cuts: [...range(228, 304, 6.6), ...range(328, 361, 13.3), ...range(381, 470, 13.3), ...range(470, 522, 3), ...range(650, 730, 13.3), ...range(757, 956, 13.3)],
  },
];

const flDots = (kind: string, x: number, w: number, ink: string) => {
  const out: React.ReactNode[] = [];
  if (kind === "drums")
    for (let i = 1; i < w; i += 3) out.push(<rect key={i} x={i} y={10 + Math.floor(noise(i + x) * 11)} width="1" height="1" fill={ink} />);
  if (kind === "bass") {
    for (let i = 0; i < w; i += 13) {
      out.push(<path key={i} d={`M${i} 9.500h1M${i + 6} 13.500h1M${i + 9} 11.500h1M${i} 20.500h1.500M${i + 4} 19.500h1.500M${i + 8} 20.500h2`} stroke={ink} />);
    }
  }
  if (kind === "piano") {
    [421, 448, 690, 717, 796, 823, 903, 929].forEach((m) => {
      if (m > x && m < x + w) out.push(<path key={m} d={`M${m - x} 17.500h7M${m - x} 19.500h7M${m - x} 21.500h7M${m - x} 15.500l3-2`} stroke={ink} />);
    });
  }
  return out;
};

const FlLaneView = ({ t, row }: { t: FlTrack; row: number }) => (
  <FlLane $row={row}>
    {t.clips.map(([a, b]) => (
      <FlClip key={a} $bg={t.bg} style={{ left: fx(a), width: b - a }}>
        <FlClipHead $c={t.head}>
          {t.segs.filter(([x]) => x >= a && x < b - 3).map(([x, text]) => (
            <SegLabel key={x} style={{ left: x - a + 1 }}>
              {t.pattern ? <PatternIcon /> : <WaveIcon />}
              {text}
            </SegLabel>
          ))}
        </FlClipHead>
        <FlCuts width={b - a} height="22">
          {t.wave && <path d={wavePath(a, b - a, t.waveMid ?? 15, t.wave)} fill={t.ink} />}
          {t.dots && flDots(t.dots, a, b - a, t.ink)}
          {(t.cuts ?? []).filter((x) => x > a && x < b).map((x) => <path key={x} d={`M${Math.round(x - a)}.500 0V22`} stroke={t.bg} strokeOpacity=".6" />)}
        </FlCuts>
      </FlClip>
    ))}
  </FlLane>
);

const Piano = () => (
  <svg width="8" height="7"><path d="M.5 0V6.500H7.500V0M3 0V5M5 0V5" stroke="#e8eef0" fill="none" /></svg>
);
const Burst = ({ c }: { c: string }) => (
  <svg width="9" height="8"><path d="M0 4H9M2.500 2V6M4.500 0V8M6.500 2V6" stroke={c} /></svg>
);
const Link = ({ c }: { c: string }) => (
  <svg width="8" height="7"><path d="M0 6H3L5 1H8" stroke={c} fill="none" /></svg>
);

const PlaylistWindow = () => (
  <Playlist>
    <Picker>
      <PickerTools><Piano /><Burst c="#58666d" /><Link c="#58666d" /></PickerTools>
      <PickerBody>
        <PatternList>
          <PatternButton $c="#62408a"><PatternIcon />Pattern 1</PatternButton>
          <PatternButton $c="#2c9080"><PatternIcon />Pattern 2</PatternButton>
          <PatternButton $c="#57b067"><PatternIcon />Pattern 3</PatternButton>
        </PatternList>
        <PickerScroll />
      </PickerBody>
      <AddButton aria-label="Add pattern">+</AddButton>
    </Picker>
    <Heads>
      <HeadTools>
        <i />
        <button aria-label="Audio clips"><Burst c="#fff" /></button>
        <button aria-label="Automation"><Link c="#869298" /></button>
        <button aria-label="Add">+</button>
        <button aria-label="Close">×</button>
        <button aria-label="More"><Link c="#76828a" /></button>
      </HeadTools>
      {flTracks.map((t, i) => (
        <PlayHead key={i} $c={t.label}><PlayName $caps={t.caps}>{t.name}</PlayName><Lamp /></PlayHead>
      ))}
      <GhostHead>Track 9</GhostHead>
    </Heads>
    <Arrange>
      <MiniMap>
        <svg width="690" height="11">
          <rect x="6" y="1" width="682" height="9" fill="#55626a" />
          <path d="M14 3.500H660" stroke="#6c5a8c" />
          <path d="M14 5.500H660" stroke="#3b8496" />
          <path d="M320 2.500H345M350 3.500H400" stroke="#7a8ad0" />
          <path d="M58 7.500H310" stroke="#8d8a4a" />
          <path d="M60 9H320M345 9H400M400 8.500H660" stroke="#66a878" strokeWidth="2" />
        </svg>
        <button aria-label="Scroll right">›</button>
      </MiniMap>
      <FlRuler>
        {range(1, 65, 2).map((n) => (
          <BarNo key={n} $major={n % 4 === 1} style={{ left: Math.round(fx(149) + (n - 1) * 13.31) }}>{n}</BarNo>
        ))}
      </FlRuler>
      <FlGrid width="100%" height="100%">
        {range(149, 1000, 106.5).map((x) => <rect key={x} x={fx(x)} y="0" width="53" height="100%" fill="#354852" />)}
        {range(149, 1000, 6.66).map((x, i) => <path key={x} d={`M${Math.round(fx(x))}.500 0V200`} stroke={i % 2 ? "#293943" : "#202e36"} />)}
        <path d="M0 184.500H1200" stroke="#1b272e" />
      </FlGrid>
      {flTracks.map((t, i) => <FlLaneView key={i} t={t} row={i} />)}
      <PlayPos style={{ left: fx(202) }} />
    </Arrange>
    <FlScroll>
      <button aria-label="Options">•</button>
      <button aria-label="Scroll up">˄</button>
      <FlThumb />
      <i />
      <button aria-label="Scroll down">˅</button>
    </FlScroll>
  </Playlist>
);

export default function App() {
  return (
    <Page>
      <Global />
      <AcidWindow />
      <PlaylistWindow />
    </Page>
  );
}
